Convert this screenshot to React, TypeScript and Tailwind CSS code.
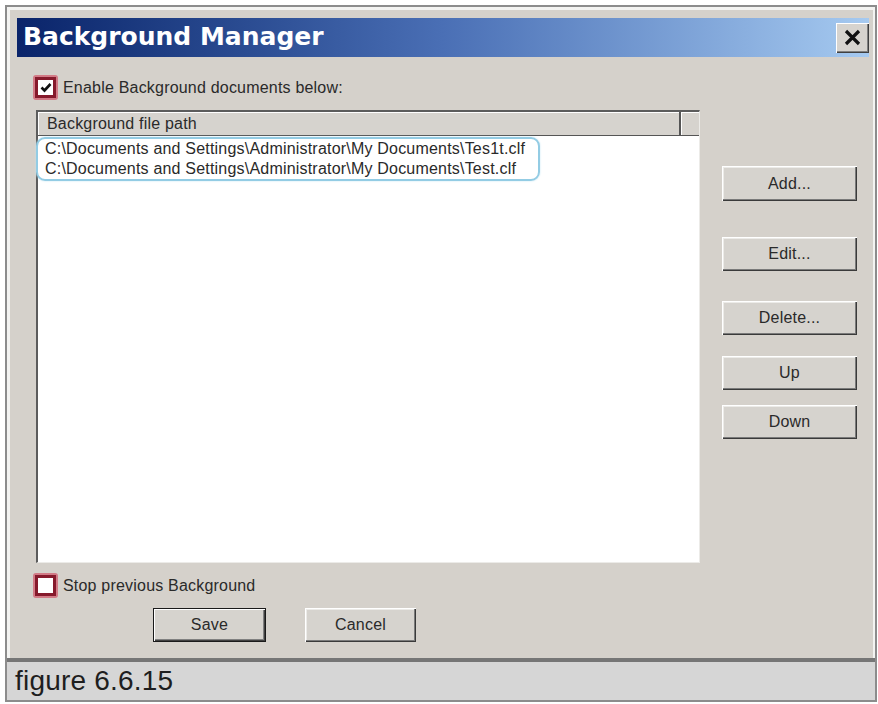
import React from 'react';

const paths = [
    'C:\\Documents and Settings\\Administrator\\My Documents\\Tes1t.clf',
    'C:\\Documents and Settings\\Administrator\\My Documents\\Test.clf',
];

function Check({ checked }: { checked: boolean }) {
    return (
        <div className="w-[25px] h-[25px] rounded-[3px] bg-[#d27a86] p-[2px] shrink-0">
            <div className="w-full h-full bg-[#861a2c] p-[3px]">
                <div className="w-full h-full bg-white flex items-center justify-center">
                    {checked && (
                        <svg width="12" height="11" viewBox="0 0 12 11">
                            <path d="M1.5 5.5 L4.5 8.5 L10.5 2" fill="none" stroke="#111" strokeWidth="2.6" />
                        </svg>
                    )}
                </div>
            </div>
        </div>
    );
}

function Btn({ label, className = '', isDefault = false }: { label: string; className?: string; isDefault?: boolean }) {
    return (
        <div
            className={`flex items-center justify-center bg-[#d6d3ce] text-[16px] tracking-[0.2px] text-[#2a2a2a] ${
                isDefault
                    ? 'border border-[#1a1a1a] shadow-[inset_1px_1px_#ffffff,inset_-1px_-1px_#404040,inset_-2px_-2px_#808080]'
                    : 'shadow-[inset_1px_1px_#ffffff,inset_-1px_-1px_#3a3a3a,inset_-2px_-2px_#7a7a7a,inset_2px_2px_#ecebe8]'
            } ${className}`}
        >
            {label}
        </div>
    );
}

export default function App() {
    return (
        <div className="w-[878px] h-[704px] bg-white pt-[5px] pl-[5px] pr-[1px] pb-[2px] font-['Liberation_Sans',Arial,sans-serif]">
            <div className="h-full flex flex-col border-2 border-[#8c8c8c]">
                {/* dialog */}
                <div className="flex-1 flex flex-col bg-[#d5d1cb] border-l-[3px] border-t-[3px] border-r-2 border-[#f3f3f1] pl-[7px] pr-[4px] pt-[8px]">
                    <div className="h-[39px] flex items-center justify-between bg-gradient-to-r from-[#0a246a] via-[#4a6fb5] to-[#a6caf0] pl-[6px]">
                        <span className="text-[25px] font-bold text-white leading-none font-['DejaVu_Sans',Verdana,sans-serif] pb-[2px]">
                            Background Manager
                        </span>
                        <div className="w-[33px] h-[30px] bg-[#d6d3ce] flex items-center justify-center shadow-[inset_1px_1px_#ffffff,inset_-1px_-1px_#404040,inset_-2px_-2px_#808080]">
                            <svg width="19" height="17" viewBox="0 0 19 17">
                                <path d="M3 2 L16 15 M16 2 L3 15" stroke="#111" strokeWidth="3.2" />
                            </svg>
                        </div>
                    </div>

                    <div className="flex flex-col pl-[16px] tracking-[0.2px]">
                        <div className="mt-[17px] flex items-center gap-[5px] text-[16px] text-[#2a2a2a]">
                            <Check checked />
                            <span className="pt-[2px]">Enable Background documents below:</span>
                        </div>

                        <div className="mt-[10px] flex">
                            <div className="ml-[3px] w-[664px] h-[453px] bg-white border-l-2 border-t-2 border-[#5c5c5c] border-r border-b border-r-[#ecebe8] border-b-[#ecebe8] flex flex-col">
                                <div className="h-[24px] flex bg-[#d6d3ce] border-b border-[#555] text-[16px] text-[#2a2a2a]">
                                    <div className="w-[643px] pl-[9px] flex items-center border-r-2 border-[#555] shadow-[inset_1px_1px_#ffffff]">
                                        Background file path
                                    </div>
                                    <div className="flex-1 shadow-[inset_1px_1px_#ffffff]" />
                                </div>
                                <div className="mt-[1px] -ml-[2px] w-[504px] border-2 border-[#93cce4] rounded-[9px] shadow-[0_0_2px_#bfe3f2] pl-[7px] text-[16px] leading-[20px] text-[#2a2a2a]">
                                    {paths.map(p => (
                                        <div key={p}>{p}</div>
                                    ))}
                                </div>
                            </div>

                            <div className="ml-[22px] w-[135px] pt-[56px] flex flex-col">
                                <Btn label="Add..." className="h-[35px]" />
                                <Btn label="Edit..." className="h-[34px] mt-[36px]" />
                                <Btn label="Delete..." className="h-[34px] mt-[30px]" />
                                <Btn label="Up" className="h-[34px] mt-[21px]" />
                                <Btn label="Down" className="h-[34px] mt-[15px]" />
                            </div>
                        </div>

                        <div className="mt-[10px] flex items-center gap-[5px] text-[16px] text-[#2a2a2a]">
                            <Check checked={false} />
                            <span className="pt-[1px]">Stop previous Background</span>
                        </div>

                        <div className="mt-[10px] flex">
                            <Btn label="Save" isDefault className="ml-[120px] w-[113px] h-[34px]" />
                            <Btn label="Cancel" className="ml-[39px] w-[111px] h-[34px]" />
                        </div>
                    </div>
                </div>

                {/* caption */}
                <div className="h-[42px] shrink-0 bg-[#d6d6d6] border-t-4 border-[#767676] flex items-center pl-[8px] text-[28px] text-[#1e1e1e] leading-none tracking-[0.2px]">
                    figure 6.6.15
                </div>
            </div>
        </div>
    );
}
